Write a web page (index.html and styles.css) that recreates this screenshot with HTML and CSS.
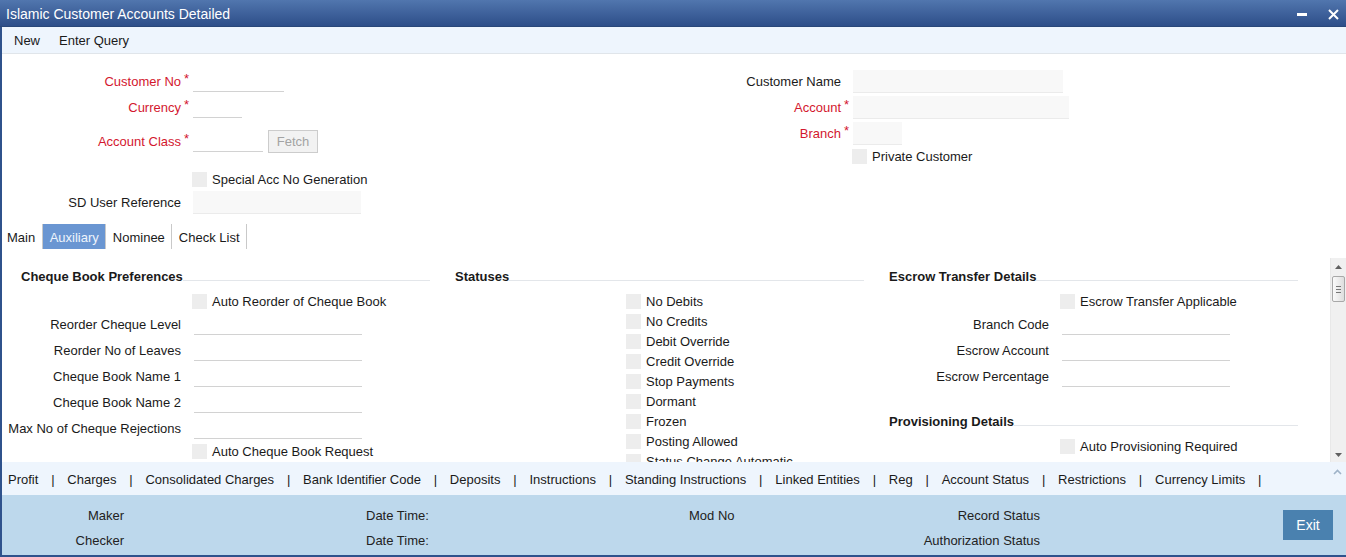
FILE: index.html
```html
<!DOCTYPE html>
<html lang="en">

<head>
    <meta charset="UTF-8">
    <meta name="viewport" content="width=device-width, initial-scale=1.0">
    <link rel="stylesheet" href="styles.css">
    <title>Islamic Customer Accounts Detailed</title>
</head>

<body>
    <div class="titleBar">
        <span class="title">Islamic Customer Accounts Detailed</span>
        <div class="windowButtons">
            <svg width="10" height="3" viewBox="0 0 10 3"><rect width="10" height="3" fill="#fff" /></svg>
            <svg width="11" height="11" viewBox="0 0 11 11"><path d="M1 1 L10 10 M10 1 L1 10" stroke="#fff" stroke-width="2" /></svg>
        </div>
    </div>
    <div class="frame">
        <div class="toolbar">
            <span>New</span>
            <span>Enter Query</span>
        </div>

        <div class="header">
            <div class="headerCol leftCol">
                <div class="row">
                    <label class="required">Customer No</label><span class="mark">*</span>
                    <input type="text" class="line" style="width: 91px;">
                </div>
                <div class="row">
                    <label class="required">Currency</label><span class="mark">*</span>
                    <input type="text" class="line" style="width: 49px;">
                </div>
                <div class="row fetchRow">
                    <label class="required">Account Class</label><span class="mark">*</span>
                    <input type="text" class="line" style="width: 70px;">
                    <button class="fetchButton">Fetch</button>
                </div>
                <div class="checkRow specialRow">
                    <input type="checkbox"><span>Special Acc No Generation</span>
                </div>
                <div class="row">
                    <label>SD User Reference</label><span class="mark"></span>
                    <input type="text" class="filled" style="width: 168px;">
                </div>
            </div>
            <div class="headerCol">
                <div class="row">
                    <label>Customer Name</label><span class="mark"></span>
                    <input type="text" class="filled" style="width: 210px;">
                </div>
                <div class="row">
                    <label class="required">Account</label><span class="mark">*</span>
                    <input type="text" class="filled" style="width: 216px;">
                </div>
                <div class="row">
                    <label class="required">Branch</label><span class="mark">*</span>
                    <input type="text" class="filled" style="width: 49px;">
                </div>
                <div class="checkRow">
                    <input type="checkbox"><span>Private Customer</span>
                </div>
            </div>
        </div>

        <div class="tabs">
            <span class="tab">Main</span>
            <span class="tab active">Auxiliary</span>
            <span class="tab">Nominee</span>
            <span class="tab">Check List</span>
        </div>

        <div class="content">
            <div class="sections">
                <div class="section">
                    <div class="secHead">Cheque Book Preferences</div>
                    <div class="checkRow"><input type="checkbox"><span>Auto Reorder of Cheque Book</span></div>
                    <div class="row"><label>Reorder Cheque Level</label><span class="mark"></span><input type="text" class="line wide"></div>
                    <div class="row"><label>Reorder No of Leaves</label><span class="mark"></span><input type="text" class="line wide"></div>
                    <div class="row"><label>Cheque Book Name 1</label><span class="mark"></span><input type="text" class="line wide"></div>
                    <div class="row"><label>Cheque Book Name 2</label><span class="mark"></span><input type="text" class="line wide"></div>
                    <div class="row"><label>Max No of Cheque Rejections</label><span class="mark"></span><input type="text" class="line wide"></div>
                    <div class="checkRow"><input type="checkbox"><span>Auto Cheque Book Request</span></div>
                </div>
                <div class="section">
                    <div class="secHead">Statuses</div>
                    <div class="checkRow"><input type="checkbox"><span>No Debits</span></div>
                    <div class="checkRow"><input type="checkbox"><span>No Credits</span></div>
                    <div class="checkRow"><input type="checkbox"><span>Debit Override</span></div>
                    <div class="checkRow"><input type="checkbox"><span>Credit Override</span></div>
                    <div class="checkRow"><input type="checkbox"><span>Stop Payments</span></div>
                    <div class="checkRow"><input type="checkbox"><span>Dormant</span></div>
                    <div class="checkRow"><input type="checkbox"><span>Frozen</span></div>
                    <div class="checkRow"><input type="checkbox"><span>Posting Allowed</span></div>
                    <div class="checkRow"><input type="checkbox"><span>Status Change Automatic</span></div>
                </div>
                <div class="section">
                    <div class="secHead">Escrow Transfer Details</div>
                    <div class="checkRow"><input type="checkbox"><span>Escrow Transfer Applicable</span></div>
                    <div class="row"><label>Branch Code</label><span class="mark"></span><input type="text" class="line wide"></div>
                    <div class="row"><label>Escrow Account</label><span class="mark"></span><input type="text" class="line wide"></div>
                    <div class="row"><label>Escrow Percentage</label><span class="mark"></span><input type="text" class="line wide"></div>
                    <div class="secHead gapTop">Provisioning Details</div>
                    <div class="checkRow"><input type="checkbox"><span>Auto Provisioning Required</span></div>
                </div>
            </div>
            <div class="vScroll">
                <svg class="arrowUp" width="7" height="4" viewBox="0 0 7 4"><path d="M0 4 L3.5 0 L7 4 Z" fill="#606060" /></svg>
                <div class="thumb"><i></i><i></i><i></i></div>
                <svg class="arrowDown" width="7" height="4" viewBox="0 0 7 4"><path d="M0 0 L3.5 4 L7 0 Z" fill="#606060" /></svg>
            </div>
        </div>

        <div class="subTabs">
            <span>Profit</span><span class="sep">|</span>
            <span>Charges</span><span class="sep">|</span>
            <span>Consolidated Charges</span><span class="sep">|</span>
            <span>Bank Identifier Code</span><span class="sep">|</span>
            <span>Deposits</span><span class="sep">|</span>
            <span>Instructions</span><span class="sep">|</span>
            <span>Standing Instructions</span><span class="sep">|</span>
            <span>Linked Entities</span><span class="sep">|</span>
            <span>Reg</span><span class="sep">|</span>
            <span>Account Status</span><span class="sep">|</span>
            <span>Restrictions</span><span class="sep">|</span>
            <span>Currency Limits</span><span class="sep">|</span>
            <svg class="caret" width="9" height="6" viewBox="0 0 9 6"><path d="M1 5 L4.5 1.5 L8 5" stroke="#9fb3c8" stroke-width="1.6" fill="none" /></svg>
        </div>

        <div class="audit">
            <div class="auditGrid">
                <span class="right">Maker</span><span></span><span>Date Time:</span><span>Mod No</span><span class="right">Record Status</span>
                <span class="right">Checker</span><span></span><span>Date Time:</span><span></span><span class="right">Authorization Status</span>
            </div>
            <button class="exitButton">Exit</button>
        </div>
    </div>
</body>

</html>
```

FILE: styles.css
```css
body {
    margin: 0;
    padding: 0;
    width: 1346px;
    height: 557px;
    overflow: hidden;
    font-family: "Liberation Sans", Arial, sans-serif;
    font-size: 13px;
    color: #1a1a1a;
    background-color: white;
}

.titleBar {
    height: 27px;
    box-sizing: border-box;
    display: flex;
    align-items: center;
    justify-content: space-between;
    padding: 2px 0 0 6px;
    background: linear-gradient(#5176ae, #2d4e89);
    border-bottom: 1px solid #294779;
    color: white;
    font-size: 14px;
}

.windowButtons {
    display: flex;
    align-items: center;
    gap: 21px;
    margin-right: 7px;
}

.frame {
    border-left: 2px solid #2f528c;
    border-bottom: 2px solid #2f528c;
}

.toolbar {
    height: 27px;
    box-sizing: border-box;
    display: flex;
    align-items: center;
    gap: 19px;
    padding: 1px 0 0 12px;
    background-color: #eef5fd;
    border-bottom: 1px solid #e0e5ea;
}

.header {
    height: 170px;
    box-sizing: border-box;
    display: flex;
    padding-left: 6px;
}

.headerCol {
    padding-top: 14px;
}

.leftCol {
    width: 660px;
}

.row {
    display: flex;
    align-items: center;
    height: 26px;
}

.row label {
    width: 173px;
    flex: none;
    text-align: right;
}

.row label.required {
    color: #d3172e;
}

.mark {
    width: 12px;
    flex: none;
    box-sizing: border-box;
    padding-left: 3px;
    color: #d3172e;
    align-self: flex-start;
    line-height: 22px;
}

input[type=text] {
    box-sizing: border-box;
    height: 22px;
    margin: 0;
    padding: 0 3px;
    border: 0;
    font: inherit;
    outline: none;
}

input.line {
    background: transparent;
    border-bottom: 1px solid #d2d2d2;
}

input.wide {
    width: 168px;
    margin-left: 1px;
}

input.filled {
    height: 23px;
    background-color: #f8f8f8;
    border-bottom: 1px solid #ebebeb;
}

.fetchRow {
    margin-top: 8px;
}

.fetchButton {
    width: 50px;
    height: 23px;
    margin-left: 5px;
    padding: 0;
    background-color: #f2f2f2;
    border: 1px solid #cccccc;
    color: #a3a3a3;
    font: inherit;
}

.checkRow {
    display: flex;
    align-items: center;
    height: 20px;
    padding-left: 184px;
}

.checkRow input[type=checkbox] {
    appearance: none;
    width: 15px;
    height: 15px;
    margin: 0 5px 0 0;
    background-color: #ededed;
    border: 0;
}

.specialRow {
    margin-top: 15px;
}

.tabs {
    display: flex;
    height: 25px;
}

.tab {
    display: flex;
    align-items: center;
    padding: 1px 6.5px 0;
    border-right: 1px solid #c9c9c9;
}

.tab.active {
    background-color: #6a96d2;
    color: #eef4fc;
}

.tabs .tab:first-child {
    padding-left: 5px;
    padding-right: 7px;
}

.content {
    display: flex;
    height: 204px;
    margin-top: 9px;
}

.sections {
    flex: 1;
    display: grid;
    grid-template-columns: repeat(3, 422px);
    column-gap: 12px;
    align-content: start;
    padding: 10px 0 0 6px;
    overflow: hidden;
}

.section {
    display: flex;
    flex-direction: column;
}

.secHead {
    display: flex;
    align-items: center;
    height: 16px;
    margin-bottom: 7px;
    padding-left: 13px;
    font-weight: bold;
    white-space: nowrap;
}

.secHead::after {
    content: "";
    flex: 1;
    height: 1px;
    margin-top: 8px;
    background-color: #e3e6ea;
}

.secHead.gapTop {
    margin-top: 24px;
}

.vScroll {
    width: 15px;
    flex: none;
    display: flex;
    flex-direction: column;
    align-items: center;
    background-color: #f0f0f0;
    border-left: 1px solid #e8e8e8;
}

.arrowUp {
    margin-top: 7px;
}

.thumb {
    width: 11px;
    height: 24px;
    margin-top: 7px;
    display: flex;
    flex-direction: column;
    justify-content: center;
    align-items: center;
    gap: 2px;
    border: 1px solid #a8a8a8;
    border-radius: 2px;
    background: linear-gradient(to right, #fafafa, #dedede);
}

.thumb i {
    display: block;
    width: 5px;
    height: 1px;
    background-color: #777;
}

.arrowDown {
    margin-top: auto;
    margin-bottom: 5px;
}

.subTabs {
    height: 33px;
    display: flex;
    align-items: center;
    padding: 1px 0 0 6px;
    box-sizing: border-box;
    background-color: #eef5fd;
    white-space: nowrap;
}

.sep {
    margin: 0 12.8px;
}

.caret {
    margin-left: auto;
    margin-right: 4px;
    margin-bottom: 15px;
}

.audit {
    height: 60px;
    display: flex;
    background-color: #bdd8ec;
    color: #222;
}

.auditGrid {
    display: grid;
    grid-template-columns: 122px 242px 323px 200px 151px;
    grid-auto-rows: 20px;
    row-gap: 5px;
    align-items: center;
    padding-top: 10px;
}

.auditGrid .right {
    text-align: right;
}

.exitButton {
    width: 50px;
    height: 30px;
    margin: 15px 13px 0 auto;
    padding: 0;
    border: 0;
    background-color: #4a81af;
    color: white;
    font-family: inherit;
    font-size: 14px;
}
```
